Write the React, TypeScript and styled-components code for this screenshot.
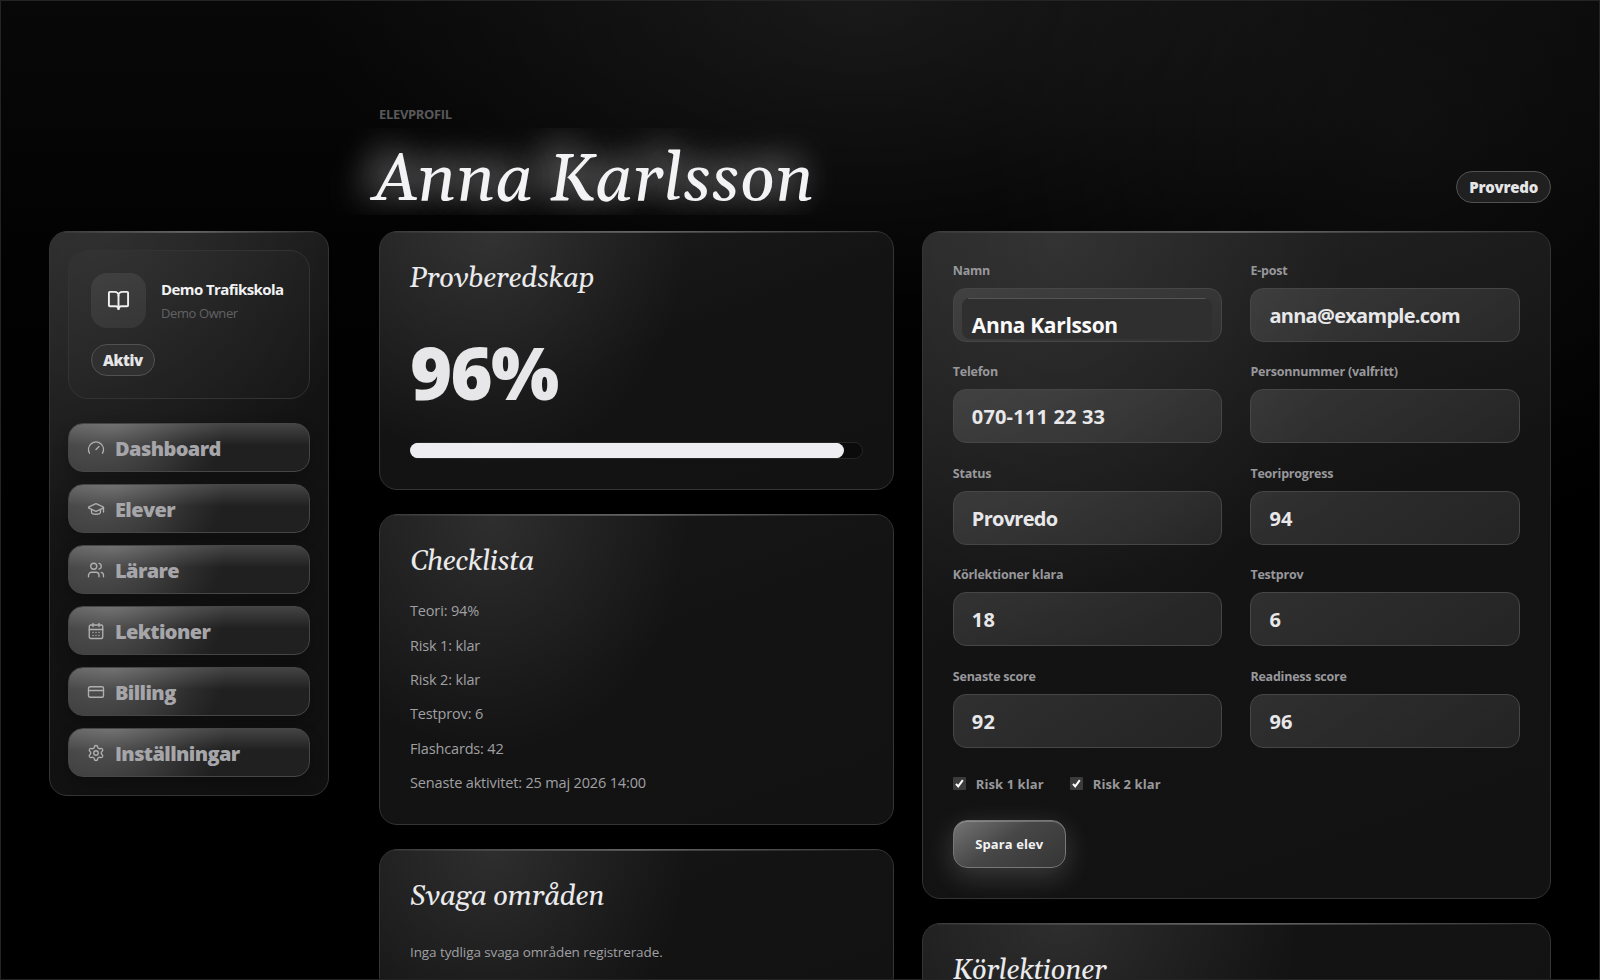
import React from 'react';
import styled, { createGlobalStyle } from 'styled-components';
import { BookOpen, CalendarDays, CreditCard, Gauge, GraduationCap, Settings, Users } from 'lucide-react';

const GlobalStyle = createGlobalStyle`
  *, *::before, *::after { box-sizing: border-box; }
  body { margin: 0; background: #000; color: #ececf0; overflow: hidden;
    font-family: "Open Sans", "Noto Sans", "Liberation Sans", sans-serif; }
  h1, h2, p { margin: 0; }
`;

const serif = '"Gelasio", "Liberation Serif", serif';

const Page = styled.div`
  height: 980px;
  overflow: hidden;
  display: grid;
  grid-template-columns: 280px minmax(0, 1fr);
  column-gap: 50px;
  padding: 103px 48px 0;
  border: 1px solid #242424;
  background:
    radial-gradient(ellipse 560px 320px at 860px 0, rgba(255, 255, 255, 0.07), transparent),
    radial-gradient(ellipse 420px 420px at 1400px 130px, rgba(255, 255, 255, 0.045), transparent),
    linear-gradient(180deg, #080808 0, #020202 260px, #000 500px);
`;

const glass = `
  position: relative;
  border: 1px solid #343434;
  border-radius: 18px;
  &::before {
    content: '';
    position: absolute;
    inset: -1px 14px auto;
    height: 2px;
    background: linear-gradient(90deg, rgba(255,255,255,0.04), rgba(255,255,255,0.24) 50%, rgba(255,255,255,0.02));
  }
`;

const Sidebar = styled.aside`
  ${glass}
  align-self: start;
  margin-top: 127px;
  padding: 18px;
  display: flex;
  flex-direction: column;
  gap: 24px;
  background:
    radial-gradient(ellipse 260px 300px at 20% 0, rgba(255, 255, 255, 0.06), transparent),
    linear-gradient(145deg, #252525, #131313 46%, #101010);
`;

const SchoolCard = styled.section`
  display: flex;
  flex-direction: column;
  align-items: flex-start;
  gap: 16px;
  padding: 22px;
  border: 1px solid #333;
  border-radius: 20px;
  background: linear-gradient(145deg, rgba(255, 255, 255, 0.02), rgba(255, 255, 255, 0.01));
`;

const School = styled.div`
  display: flex;
  align-items: center;
  gap: 15px;
`;

const Avatar = styled.div`
  width: 55px;
  height: 55px;
  border-radius: 16px;
  display: grid;
  place-items: center;
  color: #f0f0f0;
  background: linear-gradient(160deg, #404040, #363636);
`;

const SchoolName = styled.p`
  font-size: 15px;
  font-weight: 700;
  line-height: 24px;
  letter-spacing: -0.58px;
  color: #f2f2f4;
  white-space: nowrap;
`;

const Owner = styled.p`
  font-size: 13px;
  line-height: 24px;
  letter-spacing: -0.4px;
  color: #626264;
`;

const Pill = styled.span<{ $raised?: boolean }>`
  display: inline-flex;
  align-items: center;
  height: 32px;
  padding: 0 ${p => (p.$raised ? 12 : 11)}px;
  margin-bottom: ${p => (p.$raised ? 12 : 0)}px;
  border: 1px solid #515151;
  border-radius: 16px;
  background: ${p => (p.$raised ? '#202020' : '#303030')};
  font-size: 15px;
  font-weight: 800;
  letter-spacing: ${p => (p.$raised ? -0.25 : -0.4)}px;
  color: #e6e6e8;
`;

const Nav = styled.nav`
  display: grid;
  gap: 12px;
`;

const NavItem = styled.a`
  display: flex;
  align-items: center;
  gap: 10px;
  height: 49px;
  padding: 0 18px;
  border: 1px solid #464646;
  border-radius: 15px;
  background:
    linear-gradient(180deg, rgba(255, 255, 255, 0.17), transparent 46%),
    radial-gradient(ellipse 115px 95px at 18% 0, rgba(255, 255, 255, 0.21), transparent),
    linear-gradient(90deg, #303030, #202020 50%);
  background-origin: border-box;
  box-shadow: 0 6px 14px rgba(0, 0, 0, 0.25);
  font-size: 20px;
  font-weight: 800;
  line-height: 26px;
  letter-spacing: -0.61px;
  color: #a6a6aa;
  svg { color: #b0b0b2; flex: none; }
  span { padding-top: 2px; }
`;

const Main = styled.main`
  display: flex;
  flex-direction: column;
  gap: 16px;
`;

const Header = styled.header`
  display: flex;
  align-items: flex-end;
  justify-content: space-between;
`;

const Eyebrow = styled.p`
  font-size: 13px;
  font-weight: 700;
  line-height: 20px;
  letter-spacing: -0.34px;
  color: #58585a;
  margin-bottom: 4px;
`;

const Title = styled.h1`
  height: 87px;
  margin-left: -6px;
  font-family: ${serif};
  font-style: italic;
  font-weight: 400;
  font-size: 66px;
  line-height: 106px;
  letter-spacing: 0.1px;
  color: #f3f3f5;
  text-shadow: -12px -6px 36px rgba(255, 255, 255, 0.75), -8px -4px 50px rgba(255, 255, 255, 0.2);
  clip-path: inset(0 -50px);
`;

const Columns = styled.div`
  display: grid;
  grid-template-columns: 0.9fr 1.1fr;
  gap: 28px;
`;

const Stack = styled.div`
  display: flex;
  flex-direction: column;
  gap: 24px;
`;

const Card = styled.section<{ $tone?: 'bright' | 'dim' }>`
  ${glass}
  padding: 30px;
  background:
    radial-gradient(ellipse ${p => (p.$tone === 'bright' ? '46% 420px' : '38% 240px')} at 22% 0,
      rgba(255, 255, 255, ${p => (p.$tone === 'bright' ? 0.07 : 0.1)}), transparent),
    linear-gradient(160deg, ${p => (p.$tone === 'bright' ? '#262626' : p.$tone === 'dim' ? '#181818' : '#1e1e1e')},
      #131313 48%, #121212);
  background-origin: border-box;
`;

const Heading = styled.h2`
  font-family: ${serif};
  font-style: italic;
  font-weight: 400;
  font-size: 28px;
  line-height: 34px;
  letter-spacing: -0.45px;
  color: #eaeaec;
`;

const Score = styled.p`
  margin: 40px 0 33.5px;
  font-family: "Noto Sans", "Open Sans", sans-serif;
  font-size: 72px;
  font-weight: 900;
  line-height: 72px;
  letter-spacing: -1.7px;
  color: #e7e7e9;
`;

const Track = styled.div`
  height: 17px;
  border: 1px solid #262626;
  border-radius: 9px;
  background: #0b0b0b;
`;

const Fill = styled.div`
  height: 15px;
  margin-left: -1px;
  border-radius: 8px;
  border-right: 0;
  background: #eeedf2;
  box-shadow: 1px 0 0 #eeedf2;
`;

const Checks = styled.div`
  display: grid;
  gap: 12.4px;
  margin-top: 21.8px;
`;

const Line = styled.p<{ $small?: boolean }>`
  font-size: ${p => (p.$small ? 13.5 : 14.5)}px;
  line-height: 22px;
  letter-spacing: ${p => (p.$small ? -0.09 : -0.16)}px;
  margin-top: ${p => (p.$small ? 27 : 0)}px;
  color: #a0a0a4;
`;

const Fields = styled.div`
  display: grid;
  grid-template-columns: 1fr 1fr;
  gap: 21.4px 28px;
`;

const Field = styled.div`
  display: flex;
  flex-direction: column;
  gap: 8px;
`;

const Label = styled.label`
  font-size: 12.5px;
  font-weight: 700;
  line-height: 18px;
  letter-spacing: -0.22px;
  color: #98989c;
`;

const Box = styled.div<{ $numeric?: boolean }>`
  height: 54px;
  padding: 1px 18px 0;
  display: flex;
  align-items: center;
  border: 1px solid #464646;
  border-radius: 13px;
  background: linear-gradient(145deg, rgba(255, 255, 255, 0.12), rgba(255, 255, 255, 0.075));
  font-size: 20px;
  font-weight: 700;
  letter-spacing: ${p => (p.$numeric ? 0.17 : -0.72)}px;
  color: #e8e8ea;
`;

const AutofillBox = styled(Box)`
  padding: 9px 9px 2px 8px;
  align-items: stretch;
  overflow: hidden;
  background: linear-gradient(160deg, #414141, #303030);
`;

const Autofill = styled.span`
  flex: 1;
  padding-left: 10px;
  border-radius: 8px;
  background: linear-gradient(#555, #555) 50% 0 / calc(100% - 12px) 1px no-repeat, #2f2f2f;
  font-size: 21px;
  line-height: 55px;
  letter-spacing: -0.35px;
  color: #fafafa;
`;

const Flags = styled.div`
  display: flex;
  gap: 26px;
  margin: 27px 0;
`;

const Flag = styled.label`
  display: flex;
  align-items: center;
  gap: 10px;
  font-size: 13px;
  font-weight: 700;
  line-height: 18px;
  letter-spacing: 0.08px;
  color: #98989c;
`;

const Tick = styled.span`
  width: 13px;
  height: 13px;
  display: grid;
  border-radius: 1px;
  background: #3b3b3b;
`;

const Save = styled.button`
  display: block;
  width: 113px;
  height: 48px;
  padding: 0;
  border: 1px solid #777;
  border-radius: 14px;
  background: linear-gradient(145deg, #747474, #474747 45%, #353535);
  box-shadow: inset 0 1px 0 rgba(255, 255, 255, 0.22), 0 8px 28px rgba(255, 255, 255, 0.18);
  font: 700 13px "Open Sans", "Noto Sans", sans-serif;
  letter-spacing: 0.1px;
  color: #f2f2f4;
`;

const nav = [
  ['Dashboard', Gauge],
  ['Elever', GraduationCap],
  ['Lärare', Users],
  ['Lektioner', CalendarDays],
  ['Billing', CreditCard],
  ['Inställningar', Settings],
] as const;

const checklist = ['Teori: 94%', 'Risk 1: klar', 'Risk 2: klar', 'Testprov: 6', 'Flashcards: 42', 'Senaste aktivitet: 25 maj 2026 14:00'];

const fields = [
  ['E-post', 'anna@example.com'],
  ['Telefon', '070-111 22 33'],
  ['Personnummer (valfritt)', ''],
  ['Status', 'Provredo'],
  ['Teoriprogress', '94'],
  ['Körlektioner klara', '18'],
  ['Testprov', '6'],
  ['Senaste score', '92'],
  ['Readiness score', '96'],
];

const Checkbox = ({ text }: { text: string }) => (
  <Flag>
    <Tick>
      <svg width="13" height="13" viewBox="0 0 13 13" fill="none">
        <path d="M3 6.9 5.2 9.4 9.8 3.2" stroke="#fff" strokeWidth="2" />
      </svg>
    </Tick>
    {text}
  </Flag>
);

export default function App() {
  const readiness = 96;
  return (
    <>
      <GlobalStyle />
      <Page>
        <Sidebar>
          <SchoolCard>
            <School>
              <Avatar><BookOpen size={23} strokeWidth={2} /></Avatar>
              <div>
                <SchoolName>Demo Trafikskola</SchoolName>
                <Owner>Demo Owner</Owner>
              </div>
            </School>
            <Pill>Aktiv</Pill>
          </SchoolCard>
          <Nav>
            {nav.map(([label, Icon]) => (
              <NavItem key={label}><Icon size={18} strokeWidth={1.8} /><span>{label}</span></NavItem>
            ))}
          </Nav>
        </Sidebar>
        <Main>
          <Header>
            <div>
              <Eyebrow>ELEVPROFIL</Eyebrow>
              <Title>Anna Karlsson</Title>
            </div>
            <Pill $raised>Provredo</Pill>
          </Header>
          <Columns>
            <Stack>
              <Card>
                <Heading>Provberedskap</Heading>
                <Score>{readiness}%</Score>
                <Track><Fill style={{ width: `${readiness}%` }} /></Track>
              </Card>
              <Card $tone="dim">
                <Heading>Checklista</Heading>
                <Checks>{checklist.map(c => <Line key={c}>{c}</Line>)}</Checks>
              </Card>
              <Card $tone="dim">
                <Heading>Svaga områden</Heading>
                <Line $small>Inga tydliga svaga områden registrerade.</Line>
              </Card>
            </Stack>
            <Stack>
              <Card $tone="bright">
                <Fields>
                  <Field>
                    <Label>Namn</Label>
                    <AutofillBox><Autofill>Anna Karlsson</Autofill></AutofillBox>
                  </Field>
                  {fields.map(([label, value]) => (
                    <Field key={label}>
                      <Label>{label}</Label>
                      <Box $numeric={/^\d/.test(value)}>{value}</Box>
                    </Field>
                  ))}
                </Fields>
                <Flags>
                  <Checkbox text="Risk 1 klar" />
                  <Checkbox text="Risk 2 klar" />
                </Flags>
                <Save>Spara elev</Save>
              </Card>
              <Card $tone="dim">
                <Heading>Körlektioner</Heading>
              </Card>
            </Stack>
          </Columns>
        </Main>
      </Page>
    </>
  );
}
